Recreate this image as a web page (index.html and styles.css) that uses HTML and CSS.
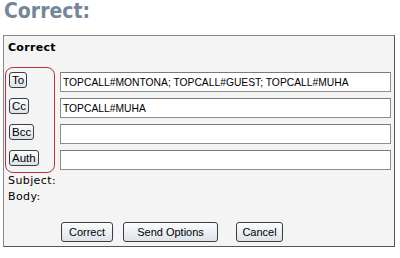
FILE: index.html
```html
<!DOCTYPE html>
<html>
<head>
<meta charset="utf-8">
<link rel="stylesheet" href="styles.css">
</head>
<body>
<h1 class="page-title">Correct:</h1>
<div class="panel">
  <div class="panel-title">Correct</div>
  <div class="recipients">
    <div class="addr-box">
      <button class="addr-btn">To</button>
      <button class="addr-btn">Cc</button>
      <button class="addr-btn">Bcc</button>
      <button class="addr-btn">Auth</button>
    </div>
    <div class="fields">
      <input class="field" type="text" value="TOPCALL#MONTONA; TOPCALL#GUEST; TOPCALL#MUHA">
      <input class="field" type="text" value="TOPCALL#MUHA">
      <input class="field" type="text" value="">
      <input class="field" type="text" value="">
    </div>
  </div>
  <div class="label">Subject:</div>
  <div class="label">Body:</div>
  <div class="actions">
    <button class="act-btn btn-correct">Correct</button>
    <button class="act-btn btn-send">Send Options</button>
    <button class="act-btn btn-cancel">Cancel</button>
  </div>
</div>
</body>
</html>
```

FILE: styles.css
```css
html, body {
  margin: 0;
  padding: 0;
  background: #ffffff;
}
body {
  width: 400px;
  height: 258px;
  overflow: hidden;
  font-family: "DejaVu Sans", Verdana, sans-serif;
}
.page-title {
  margin: 0;
  height: 35px;
  padding-left: 4px;
  font-family: "DejaVu Sans Condensed", "DejaVu Sans", sans-serif;
  font-weight: bold;
  font-size: 21px;
  line-height: 22px;
  color: #74869a;
  box-sizing: border-box;
}
.panel {
  margin-left: 3px;
  width: 392px;
  height: 212px;
  box-sizing: border-box;
  border: 1px solid #888;
  border-right-color: #555;
  border-bottom-color: #555;
  background: #f4f4f4;
  padding: 0 2px 0 0;
}
.panel-title {
  font-weight: bold;
  font-size: 11px;
  line-height: 14px;
  padding: 5px 0 0 4px;
  height: 31px;
  box-sizing: border-box;
  color: #000;
  letter-spacing: 0.3px;
}
.recipients {
  display: flex;
  align-items: flex-start;
}
.addr-box {
  margin-left: 1px;
  width: 50px;
  height: 106px;
  box-sizing: border-box;
  border: 1px solid #c0303a;
  border-radius: 8px;
  padding: 4px 0 0 3px;
  display: flex;
  flex-direction: column;
  align-items: flex-start;
  gap: 10px;
}
.addr-btn {
  height: 16px;
  padding: 0 2px;
  margin: 0;
  font-family: "Liberation Sans", Arial, sans-serif;
  font-size: 11.5px;
  line-height: 14px;
  color: #000;
  border: 1px solid #3a3f46;
  border-radius: 3px;
  background: linear-gradient(#fbfcfd, #dde3ea);
}
.fields {
  margin-left: 5px;
  padding-top: 5px;
  display: flex;
  flex-direction: column;
  gap: 6px;
}
.field {
  width: 331px;
  height: 20px;
  box-sizing: border-box;
  margin: 0;
  padding: 0 2px;
  border: 1px solid #8d8d8d;
  border-top-color: #7a7a7a;
  background: #fff;
  font-family: "Liberation Sans", Arial, sans-serif;
  font-size: 10.3px;
  color: #000;
  outline: none;
}
.label {
  padding-left: 4px;
  font-size: 11px;
  line-height: 16px;
  letter-spacing: 0.4px;
  color: #000;
}
.actions {
  display: flex;
  margin-top: 17px;
  padding-left: 57px;
}
.act-btn {
  height: 20px;
  margin: 0;
  padding: 0;
  font-family: "Liberation Sans", Arial, sans-serif;
  font-size: 11px;
  color: #000;
  border: 1px solid #3a3f46;
  border-radius: 3px;
  background: linear-gradient(#fbfcfd, #dde3ea);
}
.btn-correct { width: 52px; }
.btn-send { width: 95px; margin-left: 10px; }
.btn-cancel { width: 47px; margin-left: 18px; }
```
